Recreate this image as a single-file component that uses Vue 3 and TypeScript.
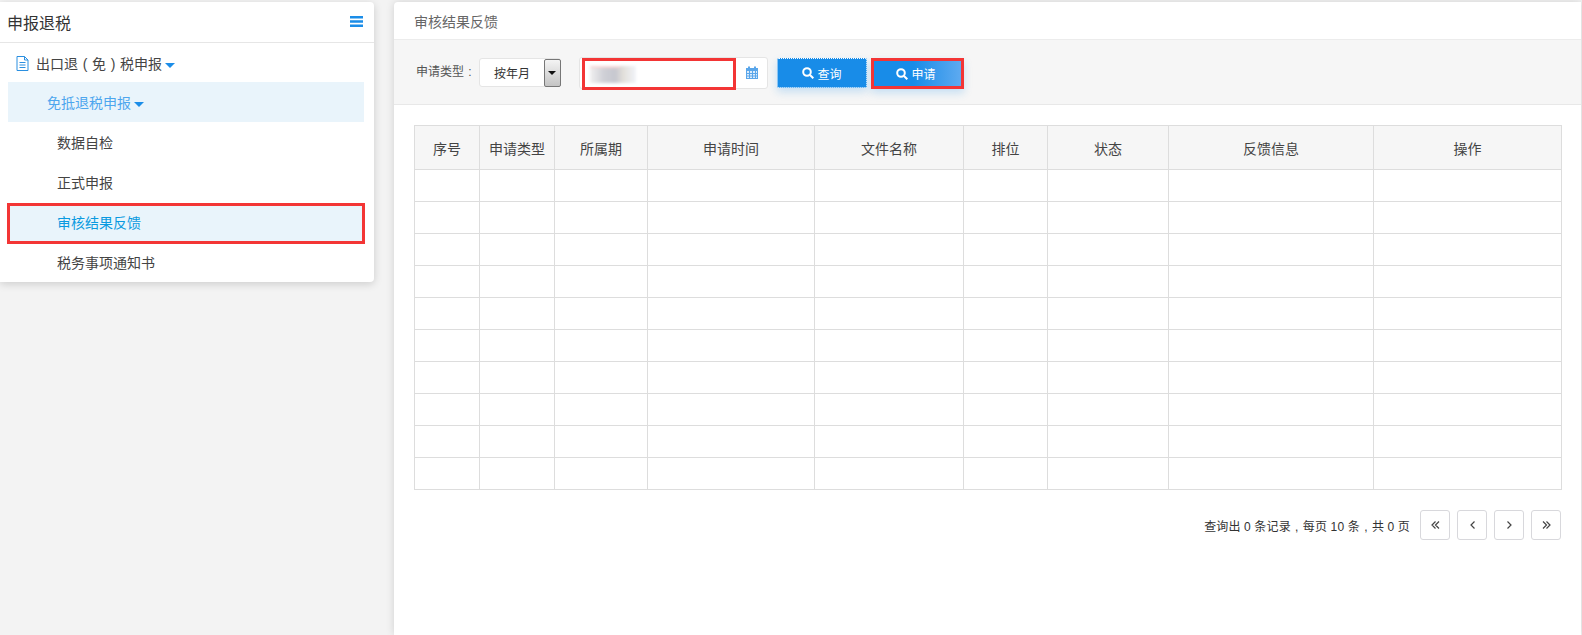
<script setup lang="ts">
const cols = [
  { t: '序号', w: 65 },
  { t: '申请类型', w: 75 },
  { t: '所属期', w: 93 },
  { t: '申请时间', w: 167 },
  { t: '文件名称', w: 149 },
  { t: '排位', w: 84 },
  { t: '状态', w: 121 },
  { t: '反馈信息', w: 205 },
  { t: '操作', w: 188 },
]
const rows = Array.from({ length: 10 }, (_, i) => i)
</script>

<template>
  <div class="page">
    <aside class="side">
      <div class="side-head">
        <span class="side-title">申报退税</span>
        <svg class="burger" width="13" height="11" viewBox="0 0 13 11"><path d="M0 0h13v2.400H0zM0 4.300h13v2.400H0zM0 8.600h13V11H0z" fill="#1b8de8"/></svg>
      </div>
      <div class="lvl1">
        <svg class="doc" width="13" height="15" viewBox="0 0 13 15" fill="none" stroke="#2a8fe0" stroke-width="1"><path d="M1 .5h7.500L12 4v10.500H1zM8.500 .5V4H12M3.500 6.500h6M3.500 9h6M3.500 11.500h6"/></svg>
        <span>出口退<span class="p">(</span>免<span class="p">)</span>税申报</span><i class="caret"></i>
      </div>
      <div class="lvl2"><span>免抵退税申报</span><i class="caret"></i></div>
      <div class="lvl3">数据自检</div>
      <div class="lvl3">正式申报</div>
      <div class="lvl3 active">审核结果反馈</div>
      <div class="lvl3">税务事项通知书</div>
    </aside>

    <main class="panel">
      <div class="crumb">审核结果反馈</div>
      <div class="toolbar">
        <span class="label">申请类型<span class="p">:</span></span>
        <div class="select">
          <span class="select-text">按年月</span>
          <span class="select-arrow"></span>
        </div>
        <div class="date">
          <div class="date-input"><span class="blur"></span></div>
          <svg class="cal" width="12" height="13" viewBox="0 0 12 13"><path d="M0 2h2V.5h2V2h4V.5h2V2h2v11H0z" fill="#5aa6ea"/><path d="M1 5h2v2H1zM4 5h2v2H4zM7 5h2v2H7zM10 5h1v2h-1zM1 8h2v1.500H1zM4 8h2v1.500H4zM7 8h2v1.500H7zM10 8h1v1.500h-1zM1 10.500h2V12H1zM4 10.500h2V12H4zM7 10.500h2V12H7zM10 10.500h1V12h-1z" fill="#dcecfb"/></svg>
        </div>
        <button class="btn query">
          <svg width="12" height="12" viewBox="0 0 12 12" fill="none" stroke="#fff" stroke-width="2"><circle cx="5" cy="5" r="3.800"/><path d="M8 8l3.300 3.300"/></svg>
          <span>查询</span>
        </button>
        <button class="btn apply">
          <svg width="12" height="12" viewBox="0 0 12 12" fill="none" stroke="#fff" stroke-width="2"><circle cx="5" cy="5" r="3.800"/><path d="M8 8l3.300 3.300"/></svg>
          <span>申请</span>
        </button>
      </div>

      <div class="content">
        <table class="grid">
          <colgroup>
            <col v-for="c in cols" :key="c.t" :style="{ width: c.w + 'px' }" />
          </colgroup>
          <thead>
            <tr><th v-for="c in cols" :key="c.t">{{ c.t }}</th></tr>
          </thead>
          <tbody>
            <tr v-for="r in rows" :key="r"><td v-for="c in cols" :key="c.t"></td></tr>
          </tbody>
        </table>

        <div class="pager">
          <span class="pager-text">查询出 0 条记录<span class="p">,</span>每页 10 条<span class="p">,</span>共 0 页</span>
          <button class="pg">
            <svg width="9" height="8" viewBox="0 0 9 8" fill="none" stroke="#444" stroke-width="1.200"><path d="M4.500 .5L1 4l3.500 3.500M8 .5L4.500 4 8 7.500"/></svg>
          </button>
          <button class="pg">
            <svg width="5" height="8" viewBox="0 0 5 8" fill="none" stroke="#444" stroke-width="1.200"><path d="M4.500 .5L1 4l3.500 3.500"/></svg>
          </button>
          <button class="pg">
            <svg width="5" height="8" viewBox="0 0 5 8" fill="none" stroke="#444" stroke-width="1.200"><path d="M.5 .5L4 4 .5 7.500"/></svg>
          </button>
          <button class="pg">
            <svg width="9" height="8" viewBox="0 0 9 8" fill="none" stroke="#444" stroke-width="1.200"><path d="M1 .5L4.500 4 1 7.500M4.500 .5L8 4 4.500 7.500"/></svg>
          </button>
        </div>
      </div>
    </main>
  </div>
</template>

<style>
html, body { margin: 0; background: #f3f3f3; overflow: hidden; }
</style>

<style scoped>
.page {
  display: flex;
  align-items: flex-start;
  height: 635px;
  padding-top: 2px;
  box-sizing: border-box;
  background: #f3f3f3;
  font-family: "Liberation Sans", "Noto Sans CJK SC", sans-serif;
  font-size: 14px;
  color: #444;
}
.p {
  display: inline-block;
  width: 1em;
  text-align: center;
}
.side {
  width: 374px;
  flex: none;
  height: 280px;
  background: #fff;
  border-radius: 0 4px 4px 0;
  box-shadow: 0 2px 9px rgba(0, 0, 0, 0.16);
}
.side-head {
  height: 40px;
  border-bottom: 1px solid #e6e6e6;
  display: flex;
  align-items: center;
  justify-content: space-between;
  padding: 0 11px 0 7px;
}
.side-title { font-size: 16px; color: #333; }
.burger { margin-bottom: 2px; }
.lvl1 {
  height: 39px;
  box-sizing: border-box;
  display: flex;
  align-items: center;
  padding: 1px 0 0 16px;
  color: #444;
}
.doc { margin-right: 7px; }
.caret {
  display: inline-block;
  width: 0;
  height: 0;
  margin: 5px 0 0 3px;
  border-left: 5px solid transparent;
  border-right: 5px solid transparent;
  border-top: 5px solid #1b8de8;
}
.lvl2 {
  height: 40px;
  margin: 0 10px 0 8px;
  padding-left: 39px;
  display: flex;
  align-items: center;
  background: #e9f4fb;
  color: #4da6ee;
}
.lvl3 {
  height: 40px;
  margin: 0 10px 0 8px;
  padding-left: 49px;
  display: flex;
  align-items: center;
  box-sizing: border-box;
  color: #444;
}
.lvl3.active {
  height: 41px;
  margin: 1px 9px -2px 7px;
  padding: 0 0 3px 47px;
  background: #e9f4fb;
  color: #0a9ae0;
  border: 3px solid #f33535;
}
.panel {
  margin-left: 20px;
  width: 1187px;
  flex: none;
  height: 633px;
  background: #fff;
  border-radius: 4px 0 0 0;
  box-shadow: 0 0 8px rgba(0, 0, 0, 0.14);
}
.crumb {
  height: 38px;
  box-sizing: border-box;
  padding-left: 20px;
  display: flex;
  align-items: center;
  font-size: 14px;
  color: #666;
  border-bottom: 1px solid #ececec;
}
.toolbar {
  height: 65px;
  box-sizing: border-box;
  background: #f6f6f6;
  border-bottom: 1px solid #e8e8e8;
  display: flex;
  align-items: flex-start;
  padding: 18px 0 0 22px;
  font-size: 12px;
}
.label {
  color: #555;
  width: 63px;
  height: 29px;
  line-height: 29px;
  flex: none;
}
.select {
  width: 82px;
  height: 29px;
  flex: none;
  box-sizing: border-box;
  background: #fff;
  border: 1px solid #e5e5e5;
  border-radius: 3px;
  display: flex;
  align-items: center;
  justify-content: space-between;
}
.select-text { margin-left: 14px; color: #333; }
.select-arrow {
  width: 17px;
  height: 28px;
  box-sizing: border-box;
  margin-right: -1px;
  border: 1px solid #777;
  border-radius: 2px;
  background: linear-gradient(#f4f4f4, #c4c4c4);
  position: relative;
}
.select-arrow::after {
  content: "";
  position: absolute;
  left: 3px;
  top: 11px;
  border-left: 4px solid transparent;
  border-right: 4px solid transparent;
  border-top: 4px solid #111;
}
.date {
  margin: -1px 0 0 18px;
  width: 189px;
  height: 32px;
  flex: none;
  box-sizing: border-box;
  display: flex;
  align-items: flex-start;
  background: #fff;
  border: 1px solid #e5e5e5;
  border-radius: 3px;
}
.date-input {
  width: 154px;
  height: 32px;
  flex: none;
  box-sizing: border-box;
  margin-left: 2px;
  border: 3px solid #f33535;
  display: flex;
  align-items: center;
}
.blur {
  width: 46px;
  height: 17px;
  margin-left: 5px;
  background:
    linear-gradient(#f8d4d4, #f8d4d4) 0 0 / 30px 2px no-repeat,
    linear-gradient(90deg, #f0f0f0 0%, #cfd0d6 30%, #c6c7cf 55%, #e2dfda 72%, #f1f4f9 100%);
  filter: blur(1.500px);
}
.cal { margin: 8px 0 0 10px; }
.btn {
  height: 30px;
  width: 90px;
  flex: none;
  box-sizing: border-box;
  display: flex;
  align-items: center;
  justify-content: center;
  gap: 3px;
  border: 0;
  padding: 0;
  color: #fff;
  font: inherit;
  font-size: 12px;
  box-shadow: 0 4px 8px rgba(27, 141, 232, 0.22);
}
.query {
  margin-left: 9px;
  background: #188ce8;
  border-radius: 2px;
  border: 1px dotted #fff;
}
.apply {
  margin-left: 4px;
  width: 93px;
  height: 31px;
  padding-right: 3px;
  background: linear-gradient(90deg, #188ce8 45%, #5eaaf0);
  border: 3px solid #f33535;
}
.content { padding: 20px 20px 0; }
.grid {
  width: 1147px;
  table-layout: fixed;
  border-collapse: collapse;
}
.grid th, .grid td { border: 1px solid #ddd; padding: 0; }
.grid th {
  height: 43px;
  background: #f6f6f6;
  font-weight: normal;
  font-size: 14px;
  color: #444;
}
.grid td { height: 31px; background: #fff; }
.pager {
  display: flex;
  justify-content: flex-end;
  align-items: center;
  margin-top: 20px;
  height: 30px;
}
.pager-text { font-size: 12px; color: #333; margin-right: 10px; letter-spacing: 0.15px; }
.pg {
  width: 30px;
  height: 30px;
  box-sizing: border-box;
  margin-left: 7px;
  padding: 0;
  display: flex;
  align-items: center;
  justify-content: center;
  background: #fff;
  border: 1px solid #d8d8dc;
  border-radius: 3px;
}
.pg:first-of-type { margin-left: 0; }
</style>
